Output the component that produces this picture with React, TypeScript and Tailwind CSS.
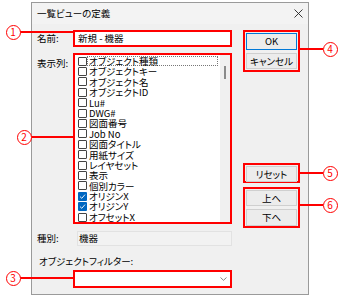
const ITEMS: [string, boolean][] = [
  ["オブジェクト種類", false],
  ["オブジェクトキー", false],
  ["オブジェクト名", false],
  ["オブジェクトID", false],
  ["Lu#", false],
  ["DWG#", false],
  ["図面番号", false],
  ["Job No", false],
  ["図面タイトル", false],
  ["用紙サイズ", false],
  ["レイヤセット", false],
  ["表示", false],
  ["個別カラー", false],
  ["オリジンX", true],
  ["オリジンY", true],
  ["オフセットX", false],
];

function CheckBox({ checked }: { checked: boolean }) {
  if (checked) {
    return (
      <span className="w-[9px] h-[9px] rounded-[1px] bg-[#0067c0] flex items-center justify-center shrink-0">
        <svg width="7" height="7" viewBox="0 0 7 7">
          <path d="M1 3.6 L2.8 5.3 L6 1.6" fill="none" stroke="#fff" strokeWidth="0.9" />
        </svg>
      </span>
    );
  }
  return <span className="w-[9px] h-[9px] rounded-[1px] border border-[#444] bg-white shrink-0" />;
}

function Callout({ n, cx, cy, x1, x2 }: { n: string; cx: number; cy: number; x1: number; x2: number }) {
  return (
    <>
      <div
        className="absolute h-[2px] bg-[#ff0000]"
        style={{ left: x1, width: x2 - x1, top: cy - 1 }}
      />
      <div
        className="absolute w-[15px] h-[15px] rounded-full border-[1.5px] border-[#ff0000] bg-white text-[#ff0000] text-[10px] leading-none flex items-center justify-center"
        style={{ left: cx - 7.5, top: cy - 7.5 }}
      >
        {n}
      </div>
    </>
  );
}

function Btn({ label, focus }: { label: string; focus?: boolean }) {
  return (
    <div
      className={
        focus
          ? "flex-1 flex items-center justify-center border border-[#0078d7] bg-[#ececec]"
          : "flex-1 flex items-center justify-center border border-[#cfcfcf] bg-[#ececec]"
      }
    >
      {label}
    </div>
  );
}

export default function App() {
  return (
    <div className="relative w-[342px] h-[299px] bg-white overflow-hidden pl-[31px] pt-[2px] font-['Noto_Sans_CJK_JP',sans-serif] text-[9.5px] text-black [font-feature-settings:'palt']">
      <div className="w-[278px] h-[293px] border border-[#9a9a9a] bg-[#f0f0f0] flex flex-col">
        <div className="h-[21px] flex items-center justify-between pl-[5px] pr-[5px] bg-[#f3f3f3]">
          <span className="text-[9.5px]">一覧ビューの定義</span>
          <svg width="9" height="9" viewBox="0 0 9 9">
            <path d="M0.5 0.5 L8.5 8.5 M8.5 0.5 L0.5 8.5" stroke="#222" strokeWidth="0.9" />
          </svg>
        </div>

        <div className="flex pl-[5px] pt-[6px]">
          <div className="w-[195px] flex flex-col">
            <div className="flex items-center h-[17px]">
              <span className="w-[36px]">名前:</span>
              <div className="w-[159px] h-[17px] border-2 border-[#ff0000] bg-white flex items-center pl-[3px]">
                新規 - 機器
              </div>
            </div>

            <div className="flex mt-[6px]">
              <span className="w-[36px] pt-[3px]">表示列:</span>
              <div className="w-[159px] h-[171px] border-2 border-[#ff0000] flex">
                <div className="flex-1 bg-white pt-[1px] pl-[3px] pr-[2px] flex flex-col">
                  {ITEMS.map(([label, checked], i) => (
                    <div key={label} className="h-[10.4px] flex items-center">
                      <CheckBox checked={checked} />
                      <span
                        className={
                          i === 0
                            ? "flex-1 h-[10.4px] leading-[9px] pl-[1px] border border-dotted border-[#777]"
                            : "flex-1 h-[10.4px] leading-[10.4px] pl-[2px]"
                        }
                      >
                        {label}
                      </span>
                    </div>
                  ))}
                </div>
                <div className="w-[10px] bg-[#f0f0f0] pt-[11px] flex justify-center">
                  <div className="w-[2px] h-[13px] bg-[#8a8a8a]" />
                </div>
              </div>
            </div>

            <div className="flex items-center h-[15px] mt-[7px]">
              <span className="w-[40px]">種別:</span>
              <div className="w-[155px] h-[15px] border border-[#e2e2e2] bg-[#f2f2f2] flex items-center pl-[1px]">
                機器
              </div>
            </div>

            <div className="mt-[10px] pl-[2px] leading-[10px]">オブジェクトフィルター:</div>

            <div className="ml-[36px] mt-[4px] w-[159px] h-[18px] border-2 border-[#ff0000] bg-white flex items-center justify-end pr-[3px]">
              <svg width="7" height="4" viewBox="0 0 7 4">
                <path d="M0.5 0.5 L3.5 3.3 L6.5 0.5" fill="none" stroke="#666" strokeWidth="0.8" />
              </svg>
            </div>
          </div>

          <div className="ml-[11px] w-[57px] flex flex-col">
            <div className="h-[42px] border-2 border-[#ff0000] p-[1px] flex flex-col gap-[3px]">
              <Btn label="OK" focus />
              <Btn label="キャンセル" />
            </div>
            <div className="mt-[91px] h-[20px] border-2 border-[#ff0000] p-[1px] flex flex-col">
              <Btn label="リセット" />
            </div>
            <div className="mt-[4px] h-[41px] border-2 border-[#ff0000] p-[1px] flex flex-col gap-[3px]">
              <Btn label="上へ" />
              <Btn label="下へ" />
            </div>
          </div>
        </div>
      </div>

      <Callout n="1" cx={13} cy={32} x1={20} x2={74} />
      <Callout n="2" cx={24} cy={137} x1={31} x2={74} />
      <Callout n="3" cx={13} cy={278} x1={20} x2={74} />
      <Callout n="4" cx={330} cy={49} x1={300} x2={323} />
      <Callout n="5" cx={330} cy={173} x1={300} x2={323} />
      <Callout n="6" cx={330} cy={205} x1={300} x2={323} />
    </div>
  );
}
